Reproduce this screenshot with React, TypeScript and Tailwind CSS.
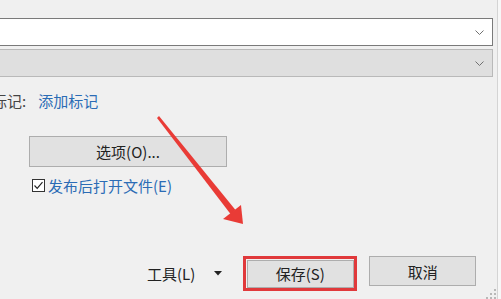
import React from 'react';

const font = { fontFamily: '"Microsoft YaHei", "Noto Sans CJK SC", "Noto Sans", sans-serif' };

function Chevron() {
  return (
    <svg width="9" height="5" viewBox="0 0 9 5" className="shrink-0">
      <polyline points="0.5,0.5 4.5,4.5 8.5,0.5" fill="none" stroke="#707070" strokeWidth="1" />
    </svg>
  );
}

function Arrow() {
  // red annotation arrow pointing at the save button
  return (
    <svg className="absolute inset-0 pointer-events-none" width="501" height="299" viewBox="0 0 501 299">
      <polygon points="157,118 159,116 235.5,210 230.5,214" fill="#e93b36" />
      <polygon points="243,224 241,205 223,219" fill="#e93b36" />
    </svg>
  );
}

function Grip() {
  const dots = [
    [494, 289], [494, 293], [494, 297],
    [490, 293], [490, 297],
    [486, 297],
  ];
  return (
    <svg className="absolute inset-0 pointer-events-none" width="501" height="299" viewBox="0 0 501 299">
      {dots.map(([x, y]) => (
        <rect key={`${x}-${y}`} x={x} y={y} width="2" height="2" fill="#b8b8b8" />
      ))}
    </svg>
  );
}

export default function App() {
  return (
    <div className="relative w-[501px] h-[299px] overflow-hidden bg-[#f0f0f0] flex" style={font}>
      <div className="w-[497px] flex flex-col shrink-0">
        {/* file name input */}
        <div className="mt-[18px] ml-[-10px] w-[503px] h-[28px] bg-white border border-[#7a7a7a] flex items-center justify-end pr-[8px]">
          <Chevron />
        </div>

        {/* type select */}
        <div className="mt-[3px] ml-[-10px] w-[503px] h-[28px] bg-[#dfdfdf] border border-[#b9b9b9] flex items-center justify-end pr-[8px]">
          <Chevron />
        </div>

        {/* tags */}
        <div className="mt-[16px] ml-[-8px] flex items-center h-[15px] text-[15px] leading-[15px]">
          <span className="text-[#444]">标记:</span>
          <span className="ml-[12px] text-[#2b6cb5]">添加标记</span>
        </div>

        {/* options */}
        <button className="mt-[28px] ml-[29px] w-[198px] h-[31px] bg-[#e1e1e1] border border-[#adadad] text-[15px] leading-none text-[#222] flex items-center justify-center">
          选项(O)...
        </button>

        {/* open after publish */}
        <div className="mt-[12px] ml-[32px] flex items-center h-[13px]">
          <span className="w-[13px] h-[13px] bg-white border border-[#333] flex items-center justify-center">
            <svg width="11" height="11" viewBox="0 0 11 11">
              <polyline points="1.5,5.5 4.2,8.3 9.5,2.2" fill="none" stroke="#222" strokeWidth="1.2" />
            </svg>
          </span>
          <span className="ml-[3px] text-[15px] leading-none text-[#2b6cb5]">发布后打开文件(E)</span>
        </div>

        {/* bottom buttons */}
        <div className="mt-[64px] flex items-start">
          <span className="mt-[10px] ml-[147px] text-[15px] leading-[15px] text-[#222]">工具(L)</span>
          <svg className="mt-[15px] ml-[19px]" width="8" height="5" viewBox="0 0 8 5">
            <polygon points="0,0 8,0 4,4.5" fill="#222" />
          </svg>
          <div className="ml-[21px] w-[114px] h-[35px] border-[3px] border-[#e0393b] p-[0.5px]">
            <button className="w-full h-full bg-[#e1e1e1] border border-[#adadad] text-[15px] leading-none text-[#222] flex items-center justify-center">
              保存(S)
            </button>
          </div>
          <button className="ml-[12px] w-[107px] h-[30px] bg-[#e1e1e1] border border-[#adadad] text-[15px] leading-none text-[#222] flex items-center justify-center">
            取消
          </button>
        </div>
      </div>
      <div className="w-[1px] h-full bg-[#d4d4d4] shrink-0" />
      <div className="flex-1 h-full bg-[#f7f7f7]" />
      <Arrow />
      <Grip />
    </div>
  );
}
